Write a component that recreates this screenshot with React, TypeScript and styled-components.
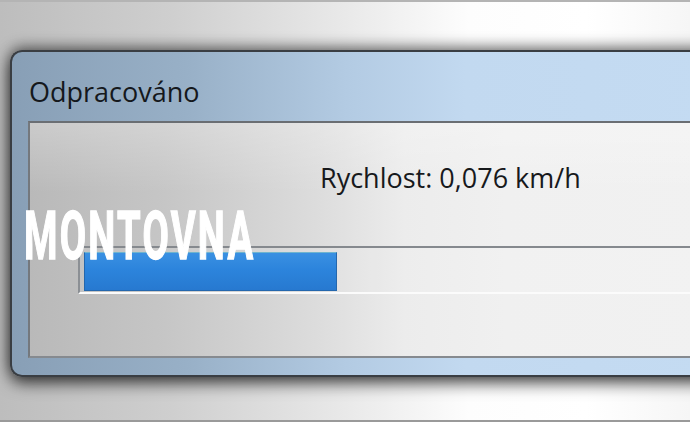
import React from "react";
import styled, { createGlobalStyle } from "styled-components";

const Global = createGlobalStyle`
  html, body { margin: 0; padding: 0; background: #ffffff; }
  body { width: 690px; height: 422px; overflow: hidden; }
`;

const Stage = styled.div`
  position: relative;
  width: 690px;
  height: 422px;
  overflow: hidden;
  box-sizing: border-box;
  padding: 50px 0 0 10px;
  background:
    linear-gradient(to bottom, #b4b4b4 0, #b4b4b4 2px, transparent 2px),
    linear-gradient(to top, #9a9a9a 0, #9a9a9a 2px, transparent 2px),
    linear-gradient(to right, #bdbdbd 0%, #cfcfcf 25%, #e9e9e9 50%, #fdfdfd 68%, #ffffff 85%, #f6f6f6 100%);
`;

const Window = styled.section`
  width: 700px;
  height: 327px;
  box-sizing: border-box;
  display: flex;
  flex-direction: column;
  border: 2px solid #3a3e43;
  border-right: none;
  border-radius: 12px 0 0 12px;
  background: linear-gradient(
    to right,
    #889fb6 0%,
    #98b0c7 25%,
    #b3cbe3 48%,
    #c2d9f0 65%,
    #c4dbf2 100%
  );
  box-shadow: 0 6px 16px rgba(0, 0, 0, 0.7), 0 -4px 14px rgba(0, 0, 0, 0.4);
`;

const TitleBar = styled.header`
  height: 69px;
  box-sizing: border-box;
  padding: 26px 0 0 17px;
  font-family: "Open Sans", "DejaVu Sans", sans-serif;
  font-size: 27px;
  line-height: 1;
  color: #15181c;
`;

const Client = styled.div`
  flex: 1;
  margin: 0 0 17px 16px;
  display: flex;
  flex-direction: column;
  border-top: 2px solid #6a6e73;
  border-left: 2px solid #74787d;
  border-bottom: 2px solid #868a8f;
  background:
    linear-gradient(to bottom, rgba(255, 255, 255, 0.25), rgba(255, 255, 255, 0) 30%),
    linear-gradient(
      to right,
      #b9b9b9 0%,
      #c6c6c6 20%,
      #dcdcdc 42%,
      #ececec 55%,
      #f0f0f0 70%,
      #f1f1f1 100%
    );
`;

const SpeedLabel = styled.div`
  margin: 41px 0 0 290px;
  font-family: "Open Sans", "DejaVu Sans", sans-serif;
  font-size: 27px;
  line-height: 1;
  color: #17191c;
  white-space: nowrap;
`;

const Track = styled.div`
  margin: 55px 0 0 48px;
  height: 48px;
  box-sizing: border-box;
  padding: 4px 0 1px 4px;
  border-top: 2px solid #85898e;
  border-left: 2px solid #8b8f94;
  border-bottom: 2px solid #fbfbfb;
  background: rgba(255, 255, 255, 0.08);
  display: flex;
`;

const Fill = styled.div<{ $width: number }>`
  width: ${(p) => p.$width}px;
  height: 39px;
  box-sizing: border-box;
  border: 1px solid #2467ad;
  border-top-color: #6fb4cf;
  background: linear-gradient(to bottom, #3a90e2 0%, #2c84dc 45%, #2779d0 100%);
`;

const Watermark = styled.div`
  position: absolute;
  left: 24px;
  top: 203px;
  font-family: Roboto, "Liberation Sans", sans-serif;
  font-weight: 700;
  font-size: 67px;
  line-height: 1;
  color: #ffffff;
  -webkit-text-stroke: 1.5px #ffffff;
  letter-spacing: 4px;
  transform: scaleX(0.57);
  transform-origin: left top;
  white-space: nowrap;
`;

export default function App() {
  return (
    <>
      <Global />
      <Stage>
        <Window>
          <TitleBar>Odpracováno</TitleBar>
          <Client>
            <SpeedLabel>Rychlost: 0,076 km/h</SpeedLabel>
            <Track>
              <Fill $width={253} />
            </Track>
          </Client>
        </Window>
        <Watermark>MONTOVNA</Watermark>
      </Stage>
    </>
  );
}
